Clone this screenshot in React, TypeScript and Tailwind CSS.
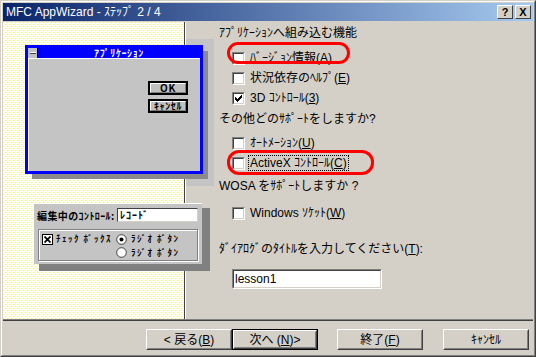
import React from 'react';

const ui = "font-['Liberation_Sans','Noto_Sans_CJK_JP',sans-serif]";
const px = "font-['Noto_Sans_CJK_JP',sans-serif] font-bold text-[10px] leading-[10px] whitespace-nowrap";
const pxs = "font-['Noto_Sans_CJK_JP',sans-serif] font-bold text-[9px] leading-[10px] whitespace-nowrap tracking-[1.5px]";

const Check: React.FC<{ checked?: boolean }> = ({ checked }) => (
    <div className="w-[13px] h-[13px] shrink-0 border border-t-[#808080] border-l-[#808080] border-b-white border-r-white">
        <div className="w-full h-full border border-t-[#404040] border-l-[#404040] border-b-[#d4d0c8] border-r-[#d4d0c8] bg-white flex items-center justify-center">
            {checked && (
                <svg width="7" height="7" viewBox="0 0 7 7" shapeRendering="crispEdges">
                    <path d="M0 2h1v3h-1z M1 3h1v3h-1z M2 4h1v3h-1z M3 3h1v3h-1z M4 2h1v3h-1z M5 1h1v3h-1z M6 0h1v3h-1z" fill="#000" />
                </svg>
            )}
        </div>
    </div>
);

const Option: React.FC<{ label: React.ReactNode; checked?: boolean; focus?: boolean }> = ({ label, checked, focus }) => (
    <div className="h-[20px] flex items-center pl-[13px] gap-[5px]">
        <Check checked={checked} />
        <span className={focus ? 'border border-dotted border-black px-[1px] leading-[14px] -ml-[2px]' : 'leading-[16px]'}>{label}</span>
    </div>
);

const Btn: React.FC<{ children: React.ReactNode; def?: boolean }> = ({ children, def }) => (
    <div className={`w-[86px] h-[21px] shrink-0 ${def ? 'border border-black' : ''}`}>
        <div className="w-full h-full border border-t-white border-l-white border-b-[#404040] border-r-[#404040]">
            <div className="w-full h-full border border-t-[#d4d0c8] border-l-[#d4d0c8] border-b-[#808080] border-r-[#808080] flex items-center justify-center text-[12px] leading-none">
                {children}
            </div>
        </div>
    </div>
);

const Dots: React.FC = () => (
    <svg className="absolute inset-0" width="100%" height="100%" shapeRendering="crispEdges">
        <defs>
            <pattern id="yd" width="4" height="4" patternUnits="userSpaceOnUse">
                <rect x="0" y="0" width="1" height="1" fill="#ffff00" />
                <rect x="2" y="2" width="1" height="1" fill="#ffff00" />
                <rect x="1" y="0" width="1" height="1" fill="#ffffa0" />
                <rect x="3" y="2" width="1" height="1" fill="#ffffa0" />
            </pattern>
        </defs>
        <rect width="100%" height="100%" fill="white" />
        <rect width="100%" height="100%" fill="url(#yd)" />
    </svg>
);

const MiniBtn: React.FC<{ children: React.ReactNode; top: number }> = ({ children, top }) => (
    <div className={`absolute left-[119px] w-[40px] h-[14px] border-2 border-black ${top === 22 ? 'top-[22px]' : 'top-[40px]'}`}>
        <div className="w-full h-full border border-t-white border-l-white border-b-[#808080] border-r-[#808080] bg-[#c0c0c0] flex items-center justify-center">
            <span className={`${px} tracking-[0.6px]`}>{children}</span>
        </div>
    </div>
);

const Radio: React.FC<{ on?: boolean; className: string }> = ({ on, className }) => (
    <svg className={`absolute ${className}`} width="11" height="11" viewBox="0 0 11 11">
        <circle cx="5.5" cy="5.5" r="4.8" fill="white" stroke="#404040" strokeWidth="1" />
        {on && <circle cx="5.5" cy="5.5" r="2" fill="black" />}
    </svg>
);

const Illustration: React.FC = () => (
    <>
        {/* shadow layers behind the sample dialog */}
        <div className="absolute left-[183px] top-[17px] w-[28px] h-[147px] bg-[#c4c4c4]" />
        <div className="absolute left-[29px] top-[29px] w-[176px] h-[128px] bg-[#8a8a8a]" />

        {/* sample dialog */}
        <div className="absolute left-[22px] top-[23px] w-[178px] h-[129px] border-[3px] border-[#0000ff] flex flex-col">
            <div className="h-[10px] flex bg-[#0000ff]">
                <div className="w-[10px] h-full bg-[#c0c0c0] border-r border-black flex items-center justify-center">
                    <div className="w-[6px] h-[2px] bg-white border-b border-[#404040]" />
                </div>
                <div className="flex-1 flex items-center justify-center">
                    <span className={`${px} tracking-[0.6px] text-white`}>ｱﾌﾟﾘｹｰｼｮﾝ</span>
                </div>
            </div>
            <div className="h-[1px] bg-white" />
            <div className="relative flex-1 bg-[#c4c4c4] border-l border-white">
                <MiniBtn top={22}>OK</MiniBtn>
                <MiniBtn top={40}>ｷｬﾝｾﾙ</MiniBtn>
            </div>
        </div>

        {/* control edit panel */}
        <div className="absolute left-[36px] top-[186px] w-[171px] h-[63px] bg-[#808080]" />
        <div className="absolute left-[30px] top-[181px] w-[169px] h-[61px] bg-[#c4c4c4] border-t border-l border-white">
            <span className={`${px} tracking-[0.4px] absolute left-[3px] top-[7px] text-black`}>編集中のｺﾝﾄﾛｰﾙ:</span>
            <div className="absolute left-[83px] top-[4px] w-[81px] h-[14px] bg-white border border-t-[#404040] border-l-[#404040] border-b-[#d4d0c8] border-r-[#d4d0c8] flex items-center pl-[2px]">
                <span className={`${px} tracking-[1px]`}>ﾚｺｰﾄﾞ</span>
            </div>
            <div className="absolute left-[4px] top-[25px] w-[160px] h-[32px] border border-[#808080] shadow-[inset_1px_1px_0_white,1px_1px_0_white]">
                <div className="absolute left-[3px] top-[4px] w-[11px] h-[11px] bg-white border border-black flex items-center justify-center">
                    <svg width="7" height="7" viewBox="0 0 7 7">
                        <path d="M0.5 0.5L6.5 6.5M6.5 0.5L0.5 6.5" stroke="black" strokeWidth="1.8" />
                    </svg>
                </div>
                <span className={`${pxs} absolute left-[17px] top-[4px]`}>ﾁｪｯｸ ﾎﾞｯｸｽ</span>
                <Radio on className="left-[77px] top-[4px]" />
                <span className={`${pxs} absolute left-[92px] top-[4px]`}>ﾗｼﾞｵ ﾎﾞﾀﾝ</span>
                <Radio className="left-[77px] top-[17px]" />
                <span className={`${pxs} absolute left-[92px] top-[18px]`}>ﾗｼﾞｵ ﾎﾞﾀﾝ</span>
            </div>
        </div>
    </>
);

const App: React.FC = () => {
    return (
        <div className={`relative w-[536px] h-[357px] overflow-hidden bg-[#d4d0c8] text-black ${ui} text-[12px]`}>
            <div className="w-full h-full border border-t-[#d4d0c8] border-l-[#d4d0c8] border-b-[#404040] border-r-[#404040]">
                <div className="w-full h-full border border-t-white border-l-white border-b-[#808080] border-r-[#808080] p-[1px] flex flex-col">
                    {/* title bar */}
                    <div className="h-[18px] shrink-0 flex items-center bg-[linear-gradient(to_right,#0a246a,#a6caf0)] pl-[3px] pr-[2px]">
                        <span className="text-white text-[12px] leading-none">MFC AppWizard - ｽﾃｯﾌﾟ 2 / 4</span>
                        <div className="ml-auto flex gap-[2px]">
                            {['?', 'X'].map(c => (
                                <div key={c} className="w-[16px] h-[14px] border border-t-white border-l-white border-b-[#404040] border-r-[#404040] bg-[#d4d0c8] flex items-center justify-center">
                                    <span className="text-[11px] font-bold leading-none text-black">{c}</span>
                                </div>
                            ))}
                        </div>
                    </div>

                    {/* main content */}
                    <div className="mt-[1px] h-[297px] shrink-0 flex">
                        <div className="relative w-[182px] shrink-0 border-r border-[#404040] shadow-[1px_0_0_white]">
                            <Dots />
                            <Illustration />
                        </div>
                        <div className="flex-1 pl-[34px] pt-[3px] flex flex-col">
                            <div className="h-[16px] leading-[16px]">ｱﾌﾟﾘｹｰｼｮﾝへ組み込む機能</div>
                            <div className="mt-[7px]">
                                <Option label="ﾊﾞｰｼﾞｮﾝ情報(A)" />
                                <Option label={<>状況依存のﾍﾙﾌﾟ(<u>E</u>)</>} />
                                <Option checked label={<>3D ｺﾝﾄﾛｰﾙ(<u>3</u>)</>} />
                            </div>
                            <div className="mt-[3px] h-[16px] leading-[16px]">その他どのｻﾎﾟｰﾄをしますか?</div>
                            <div className="mt-[6px]">
                                <Option label={<>ｵｰﾄﾒｰｼｮﾝ(<u>U</u>)</>} />
                                <Option focus label={<>ActiveX ｺﾝﾄﾛｰﾙ(<u>C</u>)</>} />
                            </div>
                            <div className="mt-[5px] h-[16px] leading-[16px]">WOSA をｻﾎﾟｰﾄしますか ?</div>
                            <div className="mt-[9px]">
                                <Option label={<>Windows ｿｹｯﾄ(<u>W</u>)</>} />
                            </div>
                            <div className="mt-[18px] h-[16px] leading-[16px]">ﾀﾞｲｱﾛｸﾞのﾀｲﾄﾙを入力してください(<u>T</u>):</div>
                            <div className="mt-[12px] ml-[13px] w-[150px] h-[20px] border border-t-[#808080] border-l-[#808080] border-b-white border-r-white">
                                <div className="w-full h-full border border-t-[#404040] border-l-[#404040] border-b-[#d4d0c8] border-r-[#d4d0c8] bg-white flex items-center pl-[1px]">
                                    <span className="leading-none">lesson1</span>
                                </div>
                            </div>
                        </div>
                    </div>

                    {/* separator */}
                    <div className="h-[2px] shrink-0 border-t border-[#808080] border-b border-b-[#404040]" />

                    {/* buttons */}
                    <div className="flex-1 flex items-start pt-[8px] pl-[143px]">
                        <Btn>&lt; 戻る(<u>B</u>)</Btn>
                        <Btn def>次へ (<u>N</u>)&gt;</Btn>
                        <div className="w-[19px] shrink-0" />
                        <Btn>終了(<u>F</u>)</Btn>
                        <div className="w-[20px] shrink-0" />
                        <Btn>ｷｬﾝｾﾙ</Btn>
                    </div>
                </div>
            </div>

            {/* red annotation marks */}
            <div className="absolute left-[227px] top-[42px] w-[123px] h-[22px] border-[3px] border-[#ff0000] rounded-[11px]" />
            <div className="absolute left-[227px] top-[150px] w-[147px] h-[25px] border-[3px] border-[#ff0000] rounded-[12px]" />
        </div>
    );
};

export default App;
